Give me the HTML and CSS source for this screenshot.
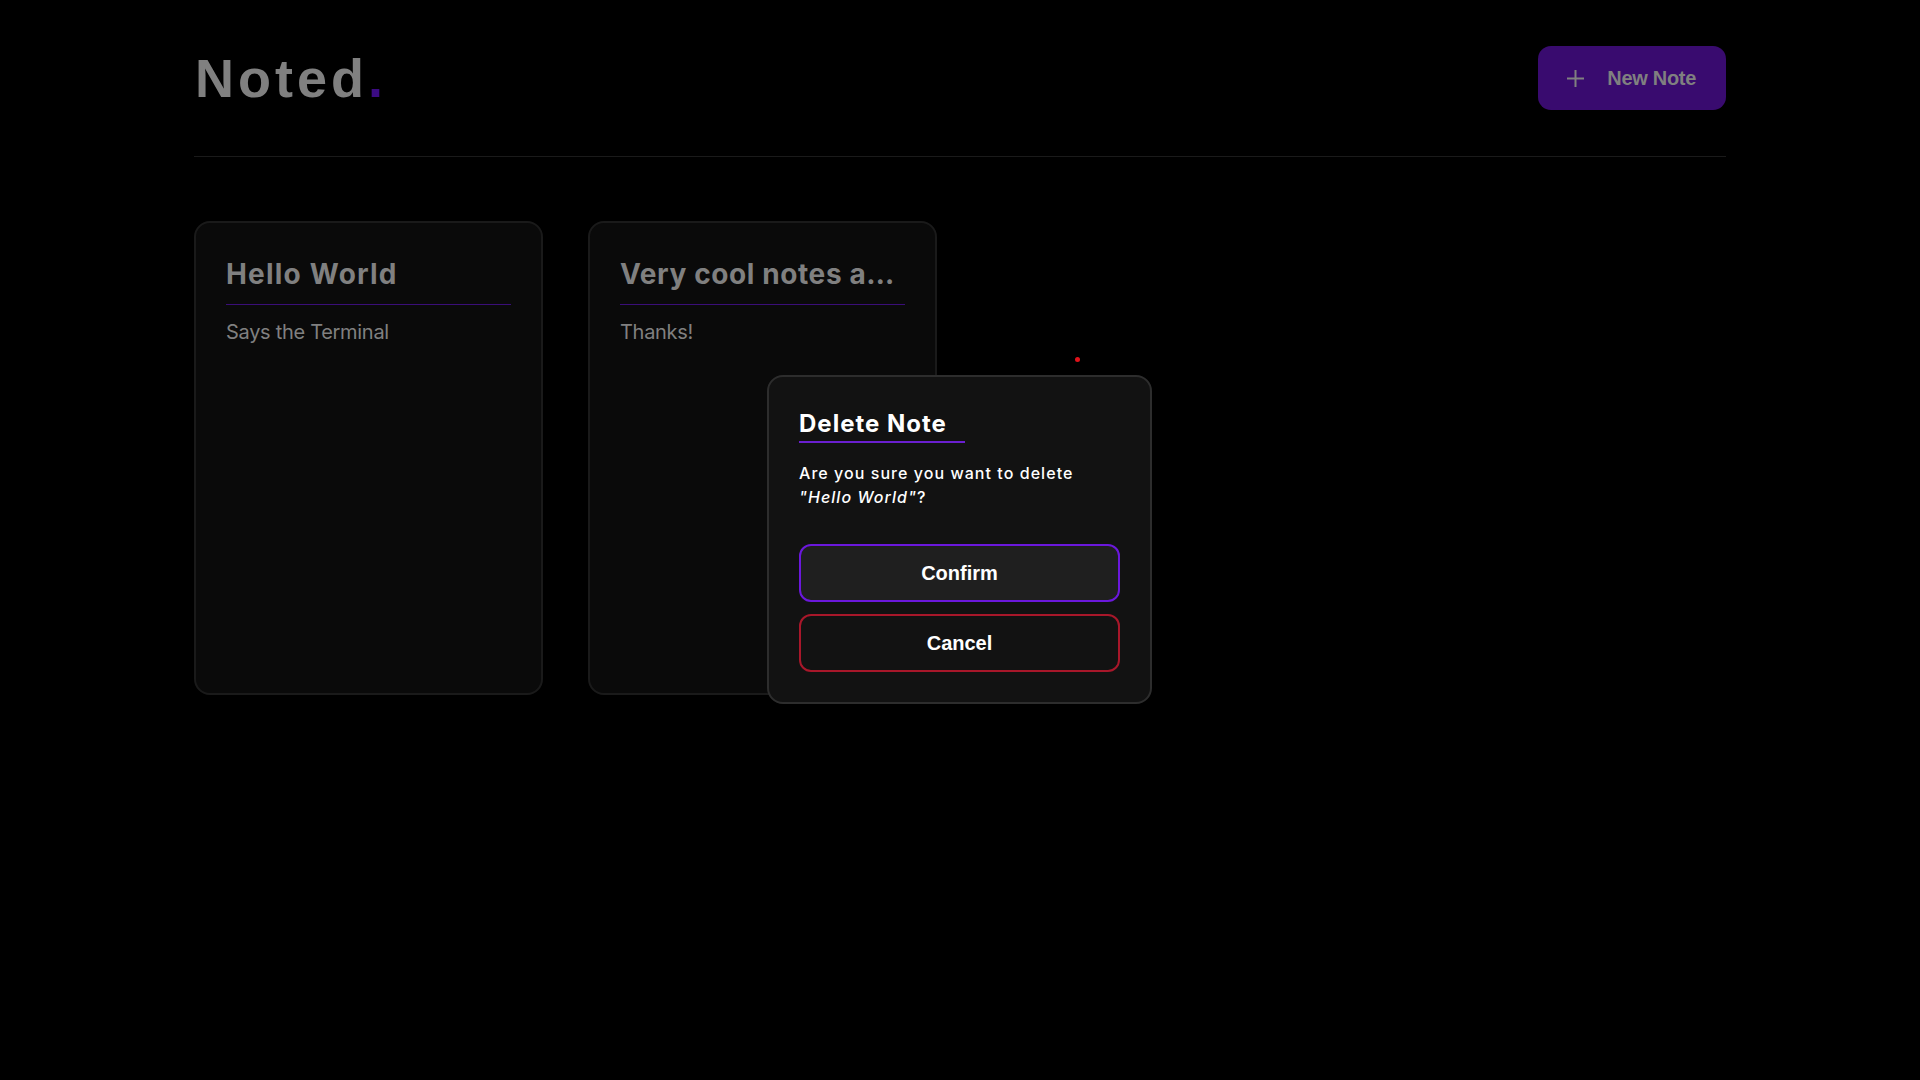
FILE: index.html
```html
<!DOCTYPE html>
<html lang="en">
<head>
<meta charset="utf-8">
<title>Noted.</title>
<link rel="stylesheet" href="styles.css">
</head>
<body>
<div class="page">
  <header class="header">
    <h1 class="logo">Noted<span class="logo-dot">.</span></h1>
    <button class="new-note">
      <svg class="plus" width="17" height="17" viewBox="0 0 17 17"><path d="M8.5 0v17M0 8.5h17" stroke="#808080" stroke-width="2"/></svg>
      <span>New Note</span>
    </button>
  </header>
  <main class="notes">
    <article class="card">
      <h2 class="card-title">Hello World</h2>
      <p class="card-body">Says the Terminal</p>
    </article>
    <article class="card">
      <h2 class="card-title card-title-long">Very cool notes a…</h2>
      <p class="card-body">Thanks!</p>
    </article>
  </main>
</div>
<div class="cursor-dot"></div>
<div class="dialog">
  <h3 class="dialog-title">Delete Note</h3>
  <p class="dialog-text">Are you sure you want to delete <em>"Hello World"</em>?</p>
  <div class="dialog-actions">
    <button class="btn btn-confirm">Confirm</button>
    <button class="btn btn-cancel">Cancel</button>
  </div>
</div>
</body>
</html>
```

FILE: styles.css
```css
* { box-sizing: border-box; }
html, body { margin: 0; padding: 0; background: #000; }
body { font-family: "Inter", "Liberation Sans", sans-serif; color: #808080; min-height: 1080px; }

.page { padding: 0 194px; }

.header {
  display: flex;
  align-items: center;
  justify-content: space-between;
  padding: 46px 0;
  border-bottom: 1px solid #1a1a1a;
}
.logo {
  margin: 0;
  font-family: "Liberation Sans", Arial, sans-serif;
  font-weight: 700;
  font-size: 54px;
  line-height: 64px;
  letter-spacing: 4px;
  color: #808080;
  padding-left: 1px;
}
.logo-dot { color: #3b0b82; }

.new-note {
  display: flex;
  align-items: center;
  gap: 23px;
  height: 64px;
  padding: 0 30px 0 29px;
  background: #390b6f;
  border: none;
  border-radius: 13px;
  color: #808080;
  font-family: "Liberation Sans", Arial, sans-serif;
  font-weight: 700;
  font-size: 20px;
  letter-spacing: -0.3px;
}
.plus { display: block; }

.notes {
  display: flex;
  gap: 45px;
  padding-top: 64px;
}
.card {
  width: 349px;
  height: 474px;
  background: #0a0a0a;
  border: 2px solid #1a1a1a;
  border-radius: 16px;
  padding: 34px 30px;
}
.card-title {
  margin: 0;
  font-size: 28px;
  font-weight: 700;
  letter-spacing: 1.2px;
  line-height: 34px;
  color: #808080;
  white-space: nowrap;
  padding-bottom: 13px;
  border-bottom: 1px solid #3a0e78;
}
.card-title-long { letter-spacing: 0.6px; }
.card-body {
  margin: 15px 0 0;
  font-size: 20px;
  line-height: 24px;
  letter-spacing: -0.3px;
  color: #808080;
}

.dialog {
  position: fixed;
  left: 767px;
  top: 375px;
  width: 385px;
  background: #121212;
  border: 2px solid #2d2d2d;
  border-radius: 16px;
  padding: 32px 30px 30px;
  color: #fff;
}
.dialog-title {
  display: inline-block;
  margin: 0;
  font-size: 24px;
  font-weight: 700;
  letter-spacing: 1px;
  line-height: 29px;
  padding: 0 18px 3px 0;
  border-bottom: 2px solid #6a1fd0;
  color: #fff;
}
.dialog-text {
  margin: 18px 0 0;
  font-size: 16px;
  font-weight: 500;
  line-height: 24px;
  letter-spacing: 1.05px;
  color: #fff;
}
.dialog-text em { font-style: italic; }
.dialog-actions {
  display: flex;
  flex-direction: column;
  gap: 12px;
  margin-top: 35px;
}
.btn {
  height: 58px;
  border-radius: 12px;
  font-family: "Liberation Sans", Arial, sans-serif;
  font-weight: 700;
  font-size: 20px;
  color: #fff;
  cursor: pointer;
}
.btn-confirm { background: #1f1f1f; border: 2px solid #6b18dc; }
.btn-cancel { background: #121212; border: 2px solid #a8172a; }

.cursor-dot {
  position: fixed;
  left: 1075px;
  top: 357px;
  width: 5px;
  height: 5px;
  border-radius: 50%;
  background: #e0121a;
}
```
